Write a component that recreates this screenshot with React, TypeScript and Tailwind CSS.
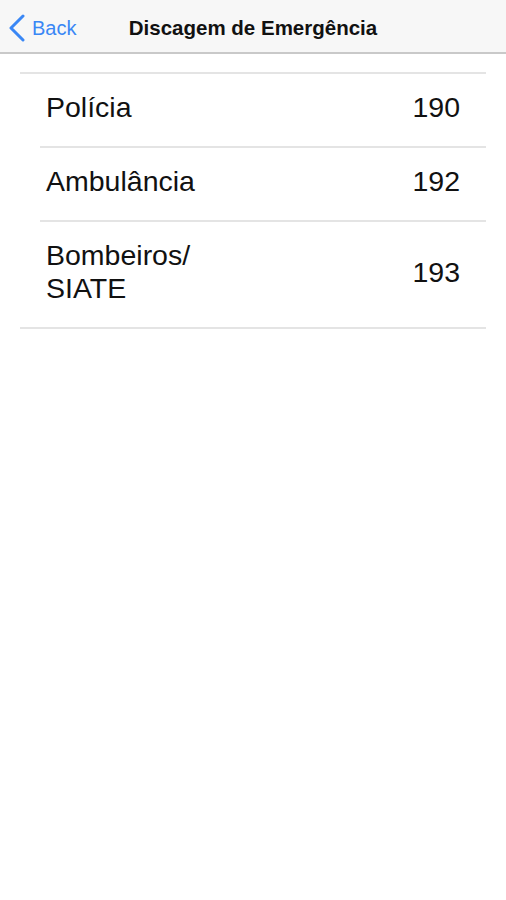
const rows = [
  { name: 'Polícia', number: '190' },
  { name: 'Ambulância', number: '192' },
  { name: 'Bombeiros/\nSIATE', number: '193' },
];

function BackChevron() {
  return (
    <svg width="18" height="28" viewBox="0 0 18 28" fill="none">
      <polyline
        points="15,2 3,14 15,26"
        stroke="currentColor"
        strokeWidth="3"
        strokeLinecap="round"
        strokeLinejoin="round"
      />
    </svg>
  );
}

export default function App() {
  return (
    <div
      className="min-h-[900px] w-full bg-white text-black"
      style={{ fontFamily: "'Liberation Sans', Arial, sans-serif" }}
    >
      <header className="relative flex h-[54px] items-center justify-center border-b-2 border-[#c9c9c9] bg-[#f7f7f7] pt-[4px]">
        <button className="absolute left-[8px] top-0 flex h-full items-center gap-[6px] pt-[4px] text-[#3a87f5]">
          <BackChevron />
          <span className="text-[20px]">Back</span>
        </button>
        <h1 className="text-[20.5px] font-bold text-[#111]">Discagem de Emergência</h1>
      </header>

      <div className="mx-[20px] mt-[18px] border-y-2 border-[#e4e4e4]">
        {rows.map((row, i) => (
          <div key={row.number} className={i === 0 ? 'ml-[20px]' : 'ml-[20px] border-t-2 border-[#e4e4e4]'}>
            <div
              className={
                'flex items-center justify-between pb-[5px] pl-[6px] pr-[26px] text-[28.5px] text-[#111] ' +
                (row.name.includes('\n') ? 'h-[105px]' : 'h-[72px]')
              }
            >
              <span className="whitespace-pre-line leading-[33px]">{row.name}</span>
              <span>{row.number}</span>
            </div>
          </div>
        ))}
      </div>
    </div>
  );
}
